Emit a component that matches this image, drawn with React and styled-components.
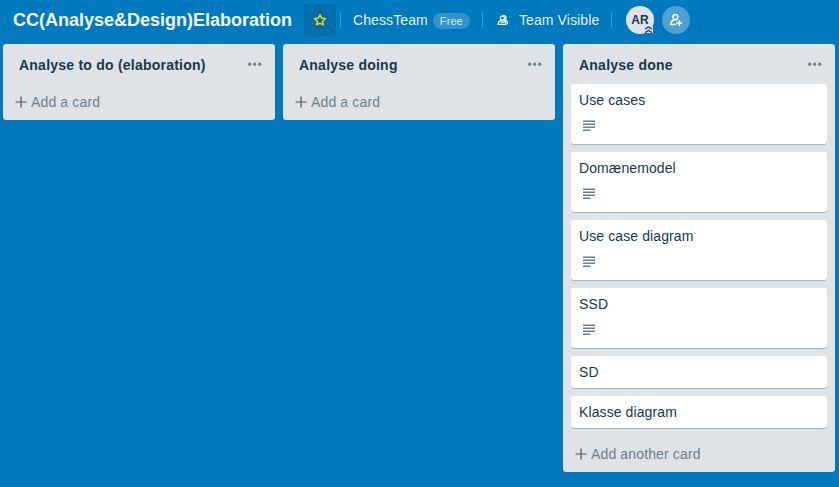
import React from "react";
import styled, { createGlobalStyle } from "styled-components";

const GlobalStyle = createGlobalStyle`
  * { box-sizing: border-box; }
  body {
    margin: 0;
    background: #0079bf;
    color: #17394d;
    font-family: "Liberation Sans", Arial, sans-serif;
    font-size: 14px;
    line-height: 20px;
    overflow: hidden;
  }
`;

const Page = styled.div`
  display: flex;
  flex-direction: column;
  width: 839px;
  height: 487px;
  background: #0079bf;
  letter-spacing: 0.1px;
`;

const Header = styled.header`
  display: flex;
  align-items: center;
  flex: none;
  height: 40px;
  padding-left: 13px;
  color: #e6f2f9;
  white-space: nowrap;
`;

const BoardTitle = styled.h1`
  width: 291px;
  margin: 0;
  color: #f5fafd;
  font-size: 18px;
  font-weight: 700;
  line-height: 32px;
  letter-spacing: 0;
`;

const StarButton = styled.button`
  display: grid;
  place-items: center;
  width: 32px;
  height: 32px;
  margin: 0 4px 0 0;
  padding: 0;
  border: 0;
  border-radius: 3px;
  background: #006dac;
`;

const Divider = styled.span`
  width: 1px;
  height: 16px;
  background: rgba(255, 255, 255, 0.24);
`;

const TeamButton = styled.div`
  display: flex;
  align-items: center;
  width: 141px;
  padding-left: 12px;
`;

const PlanBadge = styled.span`
  width: 37px;
  height: 16px;
  margin: 1px 0 0 5px;
  border-radius: 8px;
  background: #3394cc;
  color: #d9ebf5;
  font-size: 11px;
  line-height: 17px;
  text-align: center;
`;

const VisibilityButton = styled.div`
  display: flex;
  align-items: center;
  gap: 8px;
  width: 128px;
  padding-left: 12px;
`;

const Avatar = styled.div`
  position: relative;
  width: 28px;
  height: 28px;
  margin-left: 14px;
  border-radius: 50%;
  background: #dfe3e6;
  color: #17394d;
  font-size: 12px;
  font-weight: 700;
  line-height: 28px;
  text-align: center;
`;

const AdminBadge = styled.svg`
  position: absolute;
  right: 1px;
  bottom: 0;
`;

const InviteButton = styled.button`
  display: grid;
  place-items: center;
  width: 28px;
  height: 28px;
  margin: 0 0 0 8px;
  padding: 0;
  border: 0;
  border-radius: 50%;
  background: #4da1d2;
`;

const Board = styled.main`
  display: flex;
  align-items: flex-start;
  gap: 8px;
  padding: 4px 3px 0;
`;

const List = styled.section`
  flex: none;
  width: 272px;
  border-radius: 3px;
  background: #dfe3e6;
`;

const ListHeader = styled.div`
  display: flex;
  align-items: flex-start;
  justify-content: space-between;
  height: 40px;
  padding: 11px 12px 0 16px;
`;

const ListTitle = styled.h2`
  margin: 0;
  font-size: 14px;
  font-weight: 700;
  line-height: 20px;
  letter-spacing: 0.23px;
`;

const Cards = styled.div`
  display: flex;
  flex-direction: column;
  gap: 8px;
  padding: 0 8px 8px;
`;

const Card = styled.article`
  height: ${(p) => (p.$described ? 60 : 32)}px;
  padding: 6px 8px;
  border-radius: 3px;
  background: #fff;
  box-shadow: 0 1px 0 #a9b5bd;
`;

const CardBadges = styled.div`
  display: flex;
  padding: 10px 0 0 4px;
`;

const AddCard = styled.div`
  display: flex;
  align-items: center;
  gap: 4px;
  height: 36px;
  padding: 0 12px;
  color: #6b808c;
  letter-spacing: 0.14px;
`;

const StarIcon = () => (
  <svg width="14" height="14" viewBox="0 0 14 14" fill="none" stroke="#f2d600" strokeWidth="1.5" strokeLinejoin="round">
    <path d="M7 1.7 8.6 5.1l3.7.5-2.7 2.6.7 3.7L7 10.1l-3.3 1.8.7-3.7L1.7 5.6l3.7-.5Z" />
  </svg>
);

const TeamIcon = () => (
  <svg width="16" height="16" viewBox="0 0 16 16" fill="none" stroke="#fff" strokeWidth="1.25" strokeLinejoin="round" strokeLinecap="round">
    <circle cx="7.4" cy="6.2" r="2" />
    <path d="M5.9 8.1C4.1 9 3.2 10.3 3 12.3h8.2c-.1-2-.8-3.3-2.3-4.2M5.8 10H9M7.7 3.5c3.1-.6 4.1 2.3 2.8 4.2 1.4.8 2.1 2 2.2 3.8" />
  </svg>
);

const InviteIcon = () => (
  <svg width="16" height="16" viewBox="0 0 16 16" fill="none" stroke="#fff" strokeWidth="1.5" strokeLinecap="round">
    <circle cx="7.4" cy="5" r="2.4" />
    <path d="M8.6 7.9C5.2 7.1 2.8 9 2.8 12.4h4.8M11.3 8.8v4.6M9 11.1h4.6" />
  </svg>
);

const MenuIcon = () => (
  <svg width="16" height="18" viewBox="0 0 16 18" fill="#6b808c">
    <circle cx="2.7" cy="9.2" r="1.6" />
    <circle cx="7.7" cy="9.2" r="1.6" />
    <circle cx="12.7" cy="9.2" r="1.6" />
  </svg>
);

const PlusIcon = () => (
  <svg width="12" height="12" viewBox="0 0 12 12" stroke="#6b808c" strokeWidth="1.7" strokeLinecap="round">
    <path d="M6 1.2v9.6M1.2 6h9.6" />
  </svg>
);

const DescriptionIcon = () => (
  <svg width="12" height="12" viewBox="0 0 12 12" fill="#6b808c">
    <path d="M0 .4h12v1.5H0zM0 3.4h12v1.5H0zM0 6.4h12v1.5H0zM0 9.4h7.5v1.5H0z" />
  </svg>
);

const lists = [
  { title: "Analyse to do (elaboration)", cards: [] },
  { title: "Analyse doing", cards: [] },
  {
    title: "Analyse done",
    cards: [
      { title: "Use cases", described: true },
      { title: "Domænemodel", described: true },
      { title: "Use case diagram", described: true },
      { title: "SSD", described: true },
      { title: "SD" },
      { title: "Klasse diagram" },
    ],
  },
];

export default function App() {
  return (
    <Page>
      <GlobalStyle />
      <Header>
        <BoardTitle>CC(Analyse&amp;Design)Elaboration</BoardTitle>
        <StarButton aria-label="Star board"><StarIcon /></StarButton>
        <Divider />
        <TeamButton>
          ChessTeam
          <PlanBadge>Free</PlanBadge>
        </TeamButton>
        <Divider />
        <VisibilityButton>
          <TeamIcon />
          Team Visible
        </VisibilityButton>
        <Divider />
        <Avatar>
          AR
          <AdminBadge width="9" height="9" viewBox="0 0 9 9" fill="none">
            <path fill="#e9ebf2" d="M0 1.5 4.5 0 9 1.5V8H0z" />
            <path stroke="#42389d" strokeWidth="1.4" d="M1 4.1 4.5 1.8 8 4.1M1 7.6l3.5-2.3L8 7.6" />
          </AdminBadge>
        </Avatar>
        <InviteButton aria-label="Invite"><InviteIcon /></InviteButton>
      </Header>
      <Board>
        {lists.map((list) => (
          <List key={list.title}>
            <ListHeader>
              <ListTitle>{list.title}</ListTitle>
              <MenuIcon />
            </ListHeader>
            {list.cards.length > 0 && (
              <Cards>
                {list.cards.map((card) => (
                  <Card key={card.title} $described={card.described}>
                    {card.title}
                    {card.described && <CardBadges><DescriptionIcon /></CardBadges>}
                  </Card>
                ))}
              </Cards>
            )}
            <AddCard>
              <PlusIcon />
              {list.cards.length ? "Add another card" : "Add a card"}
            </AddCard>
          </List>
        ))}
      </Board>
    </Page>
  );
}
